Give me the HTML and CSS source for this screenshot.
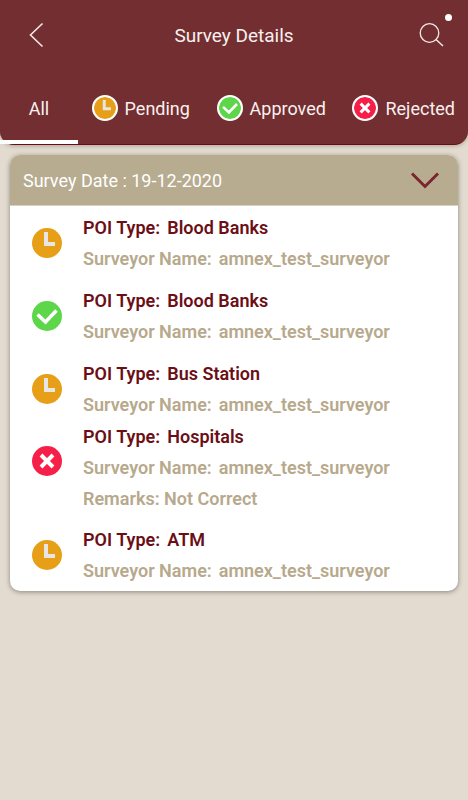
FILE: index.html
```html
<!DOCTYPE html>
<html lang="en">
<head>
  <meta charset="UTF-8">
  <meta name="viewport" content="width=device-width, initial-scale=1.0">
  <title>Survey Details</title>
  <link rel="stylesheet" href="styles.css">
</head>
<body>

<!-- Icon shapes used by the tabs and the rows -->
<svg class="sprite" aria-hidden="true">
  <symbol id="icon-pending" viewBox="0 0 30 30">
    <circle cx="15" cy="15" r="15" fill="#e69f17"/>
    <path d="M14 4v12h9" fill="none" stroke="#e8e6e3" stroke-width="4"/>
  </symbol>
  <symbol id="icon-approved" viewBox="0 0 30 30">
    <circle cx="15" cy="15" r="15" fill="#5dd64a"/>
    <path d="M5.5 13.5l8 7.500L24.500 9.500" fill="none" stroke="#fff" stroke-width="3.600"/>
  </symbol>
  <symbol id="icon-rejected" viewBox="0 0 30 30">
    <circle cx="15" cy="15" r="15" fill="#f51f4a"/>
    <path d="M9 9l12 12M21 9L9 21" fill="none" stroke="#fff" stroke-width="4"/>
  </symbol>
</svg>

<header class="header">
  <div class="title-bar">
    <button class="icon-btn" aria-label="Back">
      <svg width="30" height="30" viewBox="0 0 30 30"><path d="M22.500 3.500L10.500 15 22.500 26.500" fill="none" stroke="#f3e9e6" stroke-width="1.600"/></svg>
    </button>
    <h1>Survey Details</h1>
    <button class="icon-btn" aria-label="Search">
      <svg width="30" height="30" viewBox="0 0 30 30"><circle cx="11.500" cy="13" r="9.300" fill="none" stroke="#f3e9e6" stroke-width="1.300"/><path d="M18 19.500l7 6.500" fill="none" stroke="#f3e9e6" stroke-width="1.500"/></svg>
      <span class="dot"></span>
    </button>
  </div>

  <nav class="tabs">
    <button class="tab active">All</button>
    <button class="tab"><svg class="tab-icon"><use href="#icon-pending"/></svg>Pending</button>
    <button class="tab"><svg class="tab-icon"><use href="#icon-approved"/></svg>Approved</button>
    <button class="tab"><svg class="tab-icon"><use href="#icon-rejected"/></svg>Rejected</button>
  </nav>
</header>

<main class="card">
  <button class="card-header">
    <span>Survey Date : 19-12-2020</span>
    <svg width="30" height="20" viewBox="0 0 30 20"><path d="M2 3.500L15 16.500 28 3.500" fill="none" stroke="#7a2530" stroke-width="3"/></svg>
  </button>

  <ul class="survey-list">
    <li class="survey">
      <svg class="status"><use href="#icon-pending"/></svg>
      <div class="info">
        <p class="type"><span>POI Type:</span><span>Blood Banks</span></p>
        <p><span>Surveyor Name:</span><span>amnex_test_surveyor</span></p>
      </div>
    </li>
    <li class="survey">
      <svg class="status"><use href="#icon-approved"/></svg>
      <div class="info">
        <p class="type"><span>POI Type:</span><span>Blood Banks</span></p>
        <p><span>Surveyor Name:</span><span>amnex_test_surveyor</span></p>
      </div>
    </li>
    <li class="survey">
      <svg class="status"><use href="#icon-pending"/></svg>
      <div class="info">
        <p class="type"><span>POI Type:</span><span>Bus Station</span></p>
        <p><span>Surveyor Name:</span><span>amnex_test_surveyor</span></p>
      </div>
    </li>
    <li class="survey with-remarks">
      <svg class="status"><use href="#icon-rejected"/></svg>
      <div class="info">
        <p class="type"><span>POI Type:</span><span>Hospitals</span></p>
        <p><span>Surveyor Name:</span><span>amnex_test_surveyor</span></p>
        <p>Remarks: Not Correct</p>
      </div>
    </li>
    <li class="survey">
      <svg class="status"><use href="#icon-pending"/></svg>
      <div class="info">
        <p class="type"><span>POI Type:</span><span>ATM</span></p>
        <p><span>Surveyor Name:</span><span>amnex_test_surveyor</span></p>
      </div>
    </li>
  </ul>
</main>

</body>
</html>
```

FILE: styles.css
```css
* {
  box-sizing: border-box;
}
body {
  margin: 0;
  min-height: 100vh;
  background-color: #e3dbd0;
  font-family: Roboto, sans-serif;
  font-size: 18px;
}
button {
  border: none;
  padding: 0;
  background: none;
  color: inherit;
  font: inherit;
  cursor: pointer;
}
svg {
  display: block;
}
.sprite {
  display: none;
}
.header {
  background-color: #732e31;
  color: #f8f1ef;
  border-bottom: 1px solid #6d0c12;
  border-radius: 0 0 14px 14px;
  box-shadow: 0 1px 4px rgba(0, 0, 0, 0.25);
}
.title-bar {
  display: flex;
  align-items: center;
  justify-content: space-between;
  height: 70px;
  padding: 0 20px;
}
h1 {
  margin: 0;
  font-size: 19px;
  font-weight: 400;
}
.icon-btn {
  position: relative;
}
/* small marker over the corner of the search button */
.dot {
  position: absolute;
  top: -6px;
  right: -4px;
  width: 7px;
  height: 7px;
  border-radius: 50%;
  background-color: #fff;
}
.tabs {
  display: flex;
  justify-content: space-between;
  height: 74px;
}
.tab {
  display: flex;
  align-items: center;
  gap: 7px;
  padding: 6px 13px 0;
  border-bottom: 4px solid transparent;
}
.tab.active {
  justify-content: center;
  width: 78px;
  border-bottom-color: #fff;
}
.tab-icon {
  width: 26px;
  height: 26px;
  border: 2px solid #fff;
  border-radius: 50%;
  background-color: #fff;
}
.card {
  margin: 10px;
  border-radius: 10px;
  background-color: #fff;
  box-shadow: 0 1px 5px rgba(0, 0, 0, 0.4);
  overflow: hidden;
}
.card-header {
  display: flex;
  align-items: center;
  justify-content: space-between;
  width: 100%;
  height: 51px;
  padding: 0 18px 0 13px;
  background-color: #b7ab90;
  border-bottom: 1px solid #d8d0c2;
  color: #fff;
}
.survey-list {
  margin: 0;
  padding: 0;
  list-style: none;
}
.survey {
  display: flex;
  align-items: center;
  gap: 21px;
  height: 73px;
  padding-left: 22px;
}
.with-remarks {
  align-items: flex-start;
  height: auto;
  padding-bottom: 8px;
}
.with-remarks .status {
  margin-top: 21px;
}
.status {
  width: 30px;
  height: 30px;
}
.info {
  display: grid;
  gap: 8px;
  color: #b7a98c;
  font-weight: 600;
  line-height: 23px;
}
.info p {
  display: flex;
  gap: 7px;
  margin: 0;
}
.info .type {
  color: #6b0f16;
}
```
